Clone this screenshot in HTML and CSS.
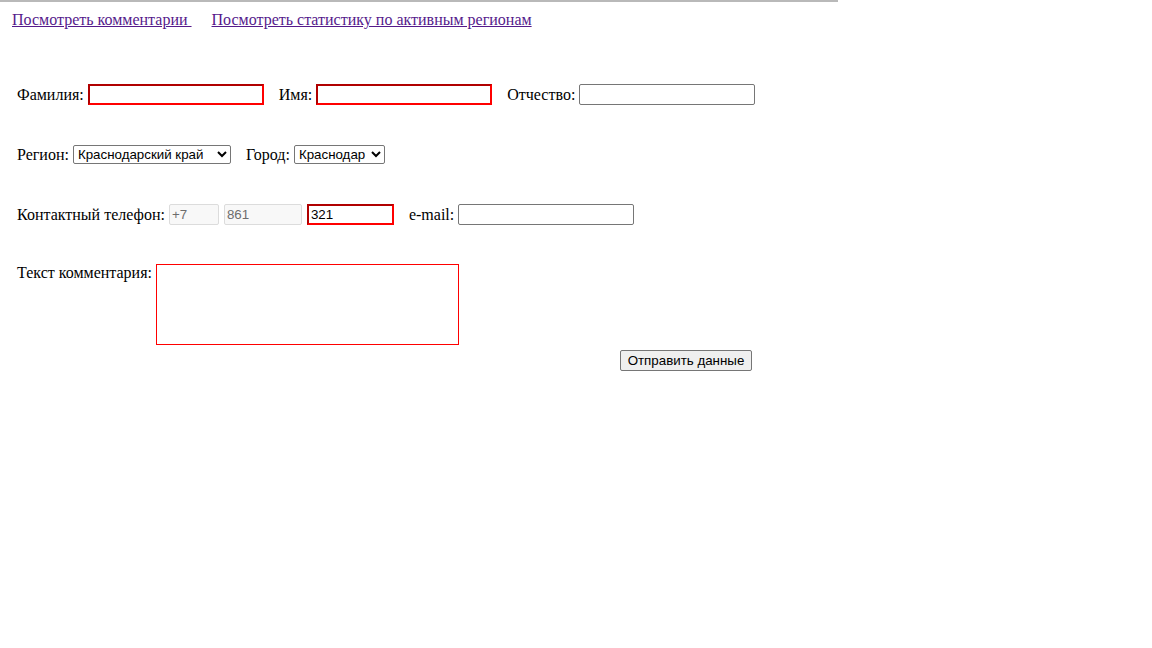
FILE: index.html
```html
<!DOCTYPE html>
<html lang="ru">
<head>
<meta charset="utf-8">
<title>Комментарии</title>
<link rel="stylesheet" href="styles.css">
</head>
<body>
<div class="topline"></div>
<nav class="nav">
  <a href="#">Посмотреть комментарии </a>
  <a href="#">Посмотреть статистику по активным регионам</a>
</nav>
<form class="form">
  <div class="row">
    <label class="field">Фамилия: <input class="inp inp-err" type="text"></label>
    <label class="field">Имя: <input class="inp inp-err" type="text"></label>
    <label class="field">Отчество: <input class="inp" type="text"></label>
  </div>
  <div class="row">
    <label class="field">Регион: <select class="sel sel-region"><option>Краснодарский край</option></select></label>
    <label class="field">Город: <select class="sel sel-city"><option>Краснодар</option></select></label>
  </div>
  <div class="row">
    <label class="field">Контактный телефон:
      <span class="phone">
        <input class="inp inp-dis inp-cc" type="text" value="+7" disabled>
        <input class="inp inp-dis inp-code" type="text" value="861" disabled>
        <input class="inp inp-err inp-num" type="text" value="321">
      </span>
    </label>
    <label class="field">e-mail: <input class="inp" type="text"></label>
  </div>
  <div class="row row-top">
    <label class="field field-top">Текст комментария: <textarea class="txt"></textarea></label>
  </div>
  <div class="row-btn">
    <button class="btn" type="button">Отправить данные</button>
  </div>
</form>
</body>
</html>
```
FILE: styles.css
```css
html, body {
  margin: 0;
  padding: 0;
  background: #fff;
}
body {
  font-family: "Liberation Serif", "Times New Roman", serif;
  font-size: 16px;
  color: #000;
}
.topline {
  width: 838px;
  height: 2px;
  background: #b9b9b9;
}
.nav {
  display: flex;
  gap: 20px;
  padding: 9px 0 0 12px;
  line-height: 18px;
}
.nav a {
  color: #551a8b;
  text-decoration: underline;
  white-space: pre;
}
.form {
  display: flex;
  flex-direction: column;
  gap: 39px;
  margin-top: 55px;
  padding-left: 17px;
  width: 735px;
}
.row {
  display: flex;
  align-items: center;
  gap: 15px;
  height: 21px;
}
.row-top {
  align-items: flex-start;
  height: auto;
}
.field {
  display: flex;
  align-items: center;
  gap: 4px;
  white-space: nowrap;
}
.field-top {
  align-items: flex-start;
}
.phone {
  display: flex;
  gap: 5px;
}
.inp {
  box-sizing: border-box;
  width: 176px;
  height: 21px;
  margin: 0;
  padding: 1px 2px;
  font-family: "Liberation Sans", Arial, sans-serif;
  font-size: 13.33px;
  border: 1px solid #767676;
  border-radius: 2px;
  background: #fff;
  color: #000;
}
.inp-err {
  border-width: 2px;
  border-style: solid;
  border-color: #b00000 #f00 #f00 #b00000;
  border-radius: 0;
}
.inp-dis {
  background: #f8f8f8;
  border: 1px solid #dcdcdc;
  color: #6d6d6d;
}
.inp-cc { width: 50px; }
.inp-code { width: 78px; }
.inp-num { width: 87px; }
.sel {
  box-sizing: border-box;
  height: 19px;
  margin: 0;
  font-family: "Liberation Sans", Arial, sans-serif;
  font-size: 13.33px;
  color: #000;
  background: #fff;
  border: 1px solid #767676;
  border-radius: 2px;
}
.sel-region { width: 158px; }
.sel-city { width: 91px; }
.txt {
  box-sizing: border-box;
  width: 303px;
  height: 81px;
  margin: 0;
  border: 1px solid #f00;
  resize: none;
  font-family: "Liberation Mono", monospace;
  font-size: 13.33px;
}
.row-btn {
  display: flex;
  justify-content: flex-end;
  margin-top: -34px;
}
.btn {
  box-sizing: border-box;
  height: 21px;
  width: 132px;
  margin: 0;
  padding: 1px 6px;
  font-family: "Liberation Sans", Arial, sans-serif;
  font-size: 13.33px;
  color: #000;
  background: #efefef;
  border: 1px solid #767676;
  border-radius: 2px;
}
```
